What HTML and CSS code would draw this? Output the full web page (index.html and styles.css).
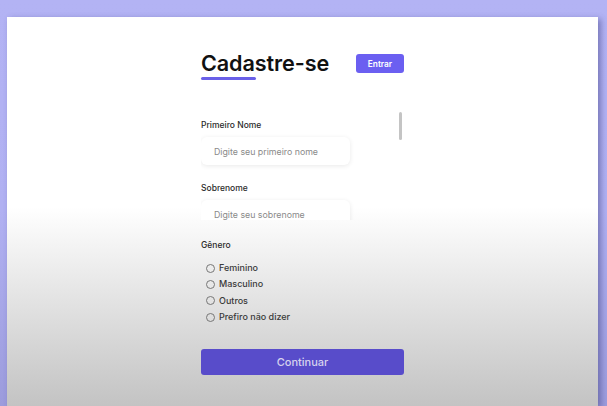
FILE: index.html
```html
<!DOCTYPE html>
<html lang="pt-BR">
<head>
<meta charset="utf-8">
<title>Cadastre-se</title>
<link rel="stylesheet" href="styles.css">
</head>
<body>
<main class="card">
  <form class="form">
    <header class="head">
      <h1 class="title">Cadastre-se</h1>
      <button type="button" class="btn-entrar">Entrar</button>
    </header>

    <div class="scroll-wrap">
      <div class="scroll">
        <div class="field">
          <label class="label">Primeiro Nome</label>
          <input class="input" type="text" placeholder="Digite seu primeiro nome">
        </div>
        <div class="field">
          <label class="label">Sobrenome</label>
          <input class="input" type="text" placeholder="Digite seu sobrenome">
        </div>
      </div>
      <span class="thumb"></span>
    </div>

    <fieldset class="gender">
      <legend class="label">Gênero</legend>
      <div class="options">
        <label class="opt"><span class="dot"></span>Feminino</label>
        <label class="opt"><span class="dot"></span>Masculino</label>
        <label class="opt"><span class="dot"></span>Outros</label>
        <label class="opt"><span class="dot"></span>Prefiro não dizer</label>
      </div>
    </fieldset>

    <button type="button" class="btn-continuar">Continuar</button>
  </form>
</main>
</body>
</html>
```

FILE: styles.css
```css
* { box-sizing: border-box; }
html, body { height: 100%; }
body {
  margin: 0;
  overflow: hidden;
  font-family: Inter, "Liberation Sans", sans-serif;
  background: linear-gradient(180deg, #b3b3f4 0px, #b1b1f2 210px, #9c9cdc 406px);
}
.card {
  margin: 17px 9px 0 7px;
  height: calc(100vh - 17px);
  background: linear-gradient(180deg, #ffffff 0px, #ffffff 190px, #f0f0f0 240px, #c3c3c3 389px);
  box-shadow: 3px 2px 6px rgba(50, 50, 120, 0.45);
  padding-top: 33px;
}
.form {
  width: 203px;
  margin-left: 194px;
  display: flex;
  flex-direction: column;
}
.head {
  display: flex;
  justify-content: space-between;
  align-items: flex-start;
}
.title {
  margin: 0;
  font-size: 21.6px;
  font-weight: 600;
  color: #111;
  line-height: 26px;
  letter-spacing: -0.1px;
}
.title::after {
  content: "";
  display: block;
  width: 55px;
  height: 3px;
  border-radius: 2px;
  background: #6a60e8;
  margin-top: 1px;
}
.btn-entrar {
  margin-top: 4px;
  width: 48px;
  height: 19px;
  border: 0;
  border-radius: 3px;
  background: #6b5ff1;
  color: #fff;
  font-family: inherit;
  font-size: 8.3px;
  font-weight: 600;
  padding: 0;
}
.scroll-wrap {
  position: relative;
  margin-top: 30px;
  height: 110px;
}
.scroll {
  height: 110px;
  overflow: hidden;
  padding-top: 9px;
}
.thumb {
  position: absolute;
  right: 2px;
  top: 2px;
  width: 3px;
  height: 28px;
  border-radius: 2px;
  background: #c4c4c4;
}
.field {
  display: flex;
  flex-direction: column;
  margin-bottom: 17px;
}
.label {
  font-size: 8.5px;
  font-weight: 500;
  color: #2a2a2a;
  line-height: 12px;
}
.input {
  margin-top: 6px;
  width: 149px;
  height: 28px;
  border: 0;
  border-radius: 6px;
  background: #fff;
  box-shadow: 0 1px 5px rgba(0, 0, 0, 0.09);
  padding: 0 0 0 13px;
  font-family: inherit;
  font-size: 8.8px;
  outline: none;
}
.input::placeholder { color: #8a8a8a; }
.gender {
  border: 0;
  margin: 19px 0 0;
  padding: 0;
}
.gender .label { padding: 0; }
.options {
  display: flex;
  flex-direction: column;
  gap: 4px;
  margin-top: 11px;
  padding-left: 5px;
}
.opt {
  display: flex;
  align-items: center;
  gap: 4px;
  font-size: 9px;
  font-weight: 500;
  color: #3a3a3a;
  line-height: 12.3px;
}
.dot {
  width: 9px;
  height: 9px;
  border: 1px solid #777;
  border-radius: 50%;
  background: transparent;
}
.btn-continuar {
  margin-top: 26px;
  width: 203px;
  height: 26px;
  border: 0;
  border-radius: 3px;
  background: #584cca;
  color: #d6d2ee;
  font-family: inherit;
  font-size: 11px;
  font-weight: 500;
  padding: 0;
}
```
